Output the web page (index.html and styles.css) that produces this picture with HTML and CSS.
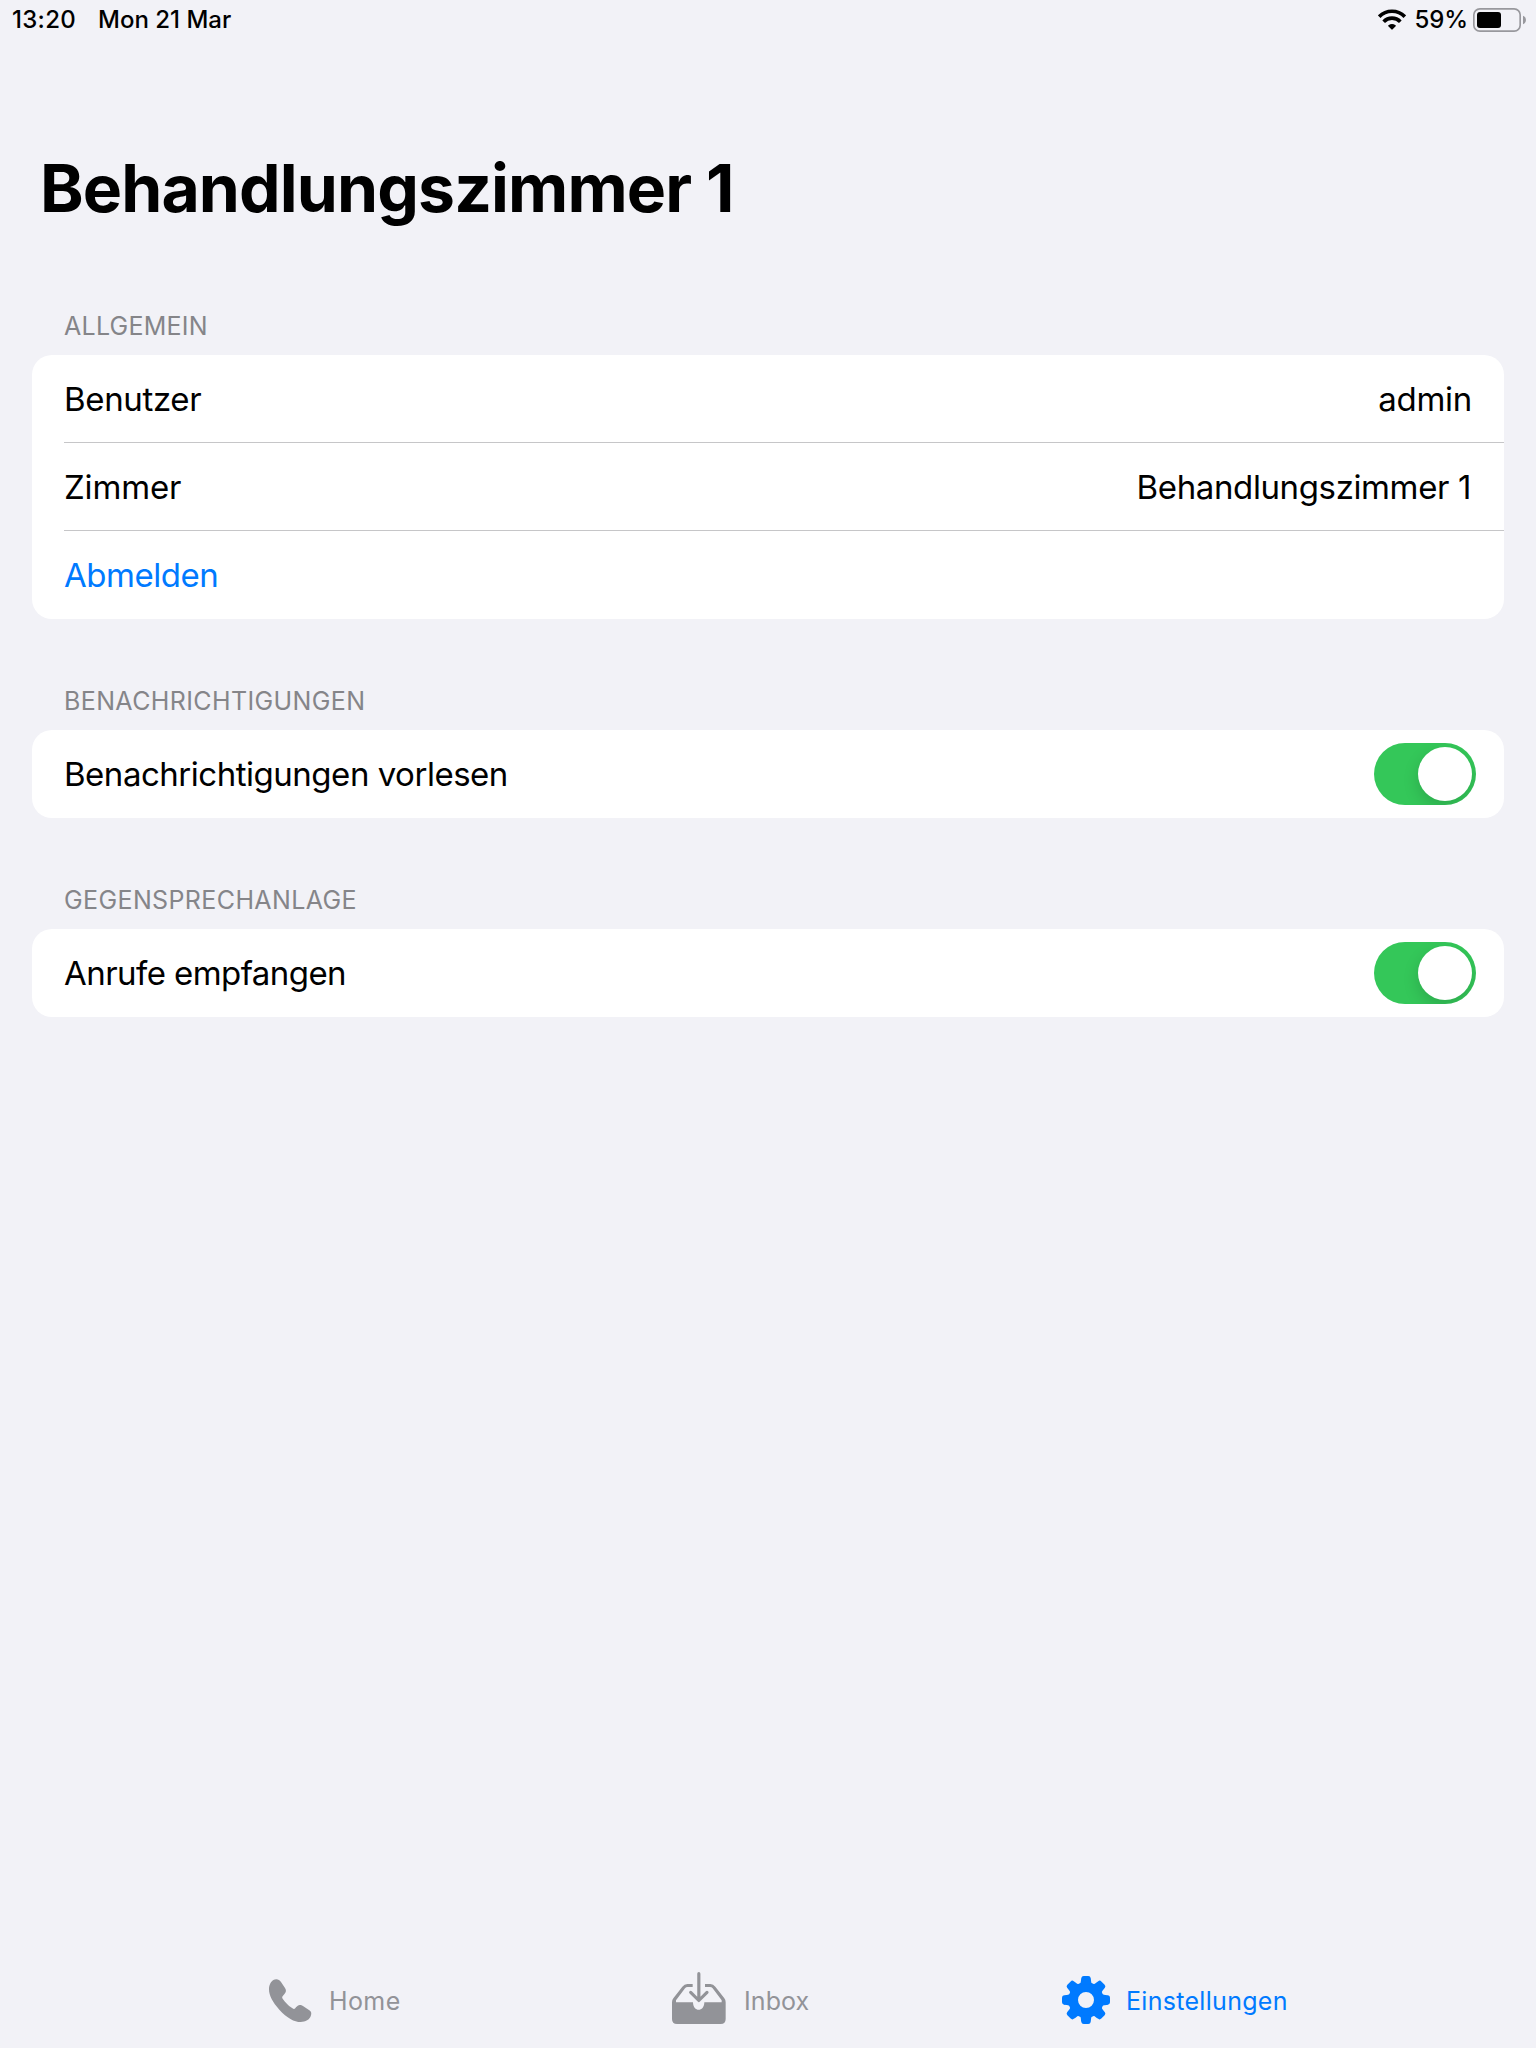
FILE: index.html
```html
<!DOCTYPE html>
<html lang="de">
<head>
<meta charset="utf-8">
<title>Einstellungen</title>
<link rel="stylesheet" href="styles.css">
</head>
<body>
<div class="screen">
  <header class="status">
    <span class="status-text time">13:20</span>
    <span class="status-text date">Mon 21 Mar</span>
    <svg class="wifi" viewBox="54 27 84 66" width="28" height="22">
      <g fill="none" stroke="#000" stroke-width="11">
        <path d="M57.500 50A54 54 0 0 1 134.500 50"/>
        <path d="M71 65A34.500 34.500 0 0 1 121 65"/>
      </g>
      <path d="M94 88 85 79Q83 77 85.500 75.500Q96 68 106.500 75.500Q109 77 107 79L98 88Q96 90 94 88Z"/>
    </svg>
    <span class="status-text percent">59%</span>
    <svg class="battery" viewBox="339 24 162 72" width="54" height="24">
      <rect x="341.500" y="26.500" width="139" height="67" rx="18" fill="none" stroke="#98989d" stroke-width="5"/>
      <rect x="351" y="36" width="72" height="48" rx="9"/>
      <path d="M489 47Q498 51 498 60T489 73Z" fill="#98989d"/>
    </svg>
  </header>

  <h1 class="title">Behandlungszimmer 1</h1>

  <main class="settings">
    <section class="group">
      <h2 class="group-title general">ALLGEMEIN</h2>
      <div class="card">
        <div class="row"><span class="label user">Benutzer</span><span class="value-user">admin</span></div>
        <div class="row"><span class="label room">Zimmer</span><span class="value-room">Behandlungszimmer 1</span></div>
        <div class="row"><a class="label link">Abmelden</a></div>
      </div>
    </section>
    <section class="group">
      <h2 class="group-title">BENACHRICHTIGUNGEN</h2>
      <div class="card">
        <div class="row"><span class="label">Benachrichtigungen vorlesen</span><span class="toggle"><span class="knob"></span></span></div>
      </div>
    </section>
    <section class="group">
      <h2 class="group-title">GEGENSPRECHANLAGE</h2>
      <div class="card">
        <div class="row"><span class="label calls">Anrufe empfangen</span><span class="toggle"><span class="knob"></span></span></div>
      </div>
    </section>
  </main>

  <nav class="tabs">
    <a class="tab home">
      <svg viewBox="54 33 138 180" width="46" height="60" fill="currentColor">
        <path d="M57 88C57 72 66 58 79 58C85 58 89 61 93 66L105 84C109 90 109 96 104 101L99 107C96 110 96 113 98 116C104 126 121 142 130 146C133 148 135 146 138 142C142 137 146 134 151 135C154 135 157 137 160 139L178 151C184 155 185 160 183 166C179 180 166 186 152 186C133 186 111 174 88 149C68 127 57 107 57 88Z"/>
      </svg>
      <span>Home</span>
    </a>
    <a class="tab inbox">
      <svg viewBox="66 33 162 180" width="54" height="60" fill="currentColor">
        <path d="M66 127Q66 120 70 115L97 80Q103 72 112 72H128V81H113Q108 81 105 85L78 121V127H129C129 157 163 157 163 127H215V121L188 85Q185 81 180 81H165V72H181Q190 72 196 80L223 115Q227 120 227 127V177Q227 192 212 192H81Q66 192 66 177Z"/>
        <path d="M146.500 41V119M122 97 146.500 121.500 171 97" fill="none" stroke="currentColor" stroke-width="9.500" stroke-linecap="round" stroke-linejoin="round"/>
      </svg>
      <span>Inbox</span>
    </a>
    <a class="tab active">
      <svg viewBox="36 33 144 180" width="48" height="60" fill="currentColor">
        <defs><path id="tooth" d="M87 74C94 70 92 62 94 54Q95 48 101 48H115Q121 48 122 54C124 62 122 70 129 74Z"/></defs>
        <circle cx="108" cy="120" r="38.500" fill="none" stroke="currentColor" stroke-width="29"/>
        <use href="#tooth"/>
        <use href="#tooth" transform="rotate(45 108 120)"/>
        <use href="#tooth" transform="rotate(90 108 120)"/>
        <use href="#tooth" transform="rotate(135 108 120)"/>
        <use href="#tooth" transform="rotate(180 108 120)"/>
        <use href="#tooth" transform="rotate(225 108 120)"/>
        <use href="#tooth" transform="rotate(270 108 120)"/>
        <use href="#tooth" transform="rotate(315 108 120)"/>
      </svg>
      <span>Einstellungen</span>
    </a>
  </nav>
</div>
</body>
</html>
```
FILE: styles.css
```css
* { box-sizing: border-box; }

body {
  margin: 0;
  background: #f2f2f7;
  color: #000;
  font-family: Inter, "Liberation Sans", sans-serif;
}

.screen {
  display: flex;
  flex-direction: column;
  height: 2048px;
}

.status {
  display: flex;
  align-items: center;
  height: 40px;
  padding: 0 9px 0 12px;
}

.status-text {
  font-size: 24px;
  font-weight: 500;
  line-height: 38px;
  white-space: nowrap;
}

.time { letter-spacing: 0.3px; }
.date { margin-left: 22px; }
.wifi { margin-left: auto; }
.percent { margin: 0 5px 0 9px; letter-spacing: -0.1px; }

.title {
  margin: 108px 0 83px;
  padding-left: 40px;
  font-size: 66px;
  font-weight: 700;
  line-height: 80px;
  letter-spacing: -0.88px;
}

.settings {
  display: flex;
  flex-direction: column;
  gap: 67px;
  padding: 0 32px;
}

.group-title {
  margin: 0 0 14px 32px;
  color: #858589;
  font-size: 25px;
  font-weight: 400;
  line-height: 30px;
  letter-spacing: 0.38px;
}

.general { letter-spacing: 0.25px; }

.card {
  padding-left: 32px;
  border-radius: 20px;
  background: #fff;
}

.row {
  display: flex;
  align-items: center;
  justify-content: space-between;
  height: 88px;
  font-size: 33px;
  line-height: 88px;
}

.row:not(:last-child) { box-shadow: inset 0 -1px #c6c6c8; }

.label { letter-spacing: -0.48px; }
.user { letter-spacing: -0.35px; }
.room { letter-spacing: -0.15px; }
.calls { letter-spacing: -0.56px; }
.link { color: #007aff; }
.value-user { margin-right: 32px; letter-spacing: -0.3px; }
.value-room { margin-right: 33px; letter-spacing: -0.38px; }

.toggle {
  display: flex;
  justify-content: flex-end;
  width: 102px;
  height: 62px;
  margin-right: 28px;
  padding: 4px;
  overflow: hidden;
  border-radius: 31px;
  background: #34c759;
}

.knob {
  width: 54px;
  height: 54px;
  border-radius: 50%;
  background: #fff;
  box-shadow: 0 6px 16px rgba(0, 0, 0, 0.15);
}

.tabs {
  display: grid;
  grid-template-columns: 404px 390px auto;
  align-items: center;
  height: 94px;
  margin-top: auto;
  padding-left: 268px;
}

.tab {
  display: flex;
  align-items: center;
  gap: 16px;
  color: #929398;
  font-size: 25px;
  line-height: 60px;
}

.home { gap: 15px; letter-spacing: 0.4px; }
.inbox { gap: 18px; letter-spacing: 0.1px; }
.active { color: #007aff; letter-spacing: 0.3px; }
```
